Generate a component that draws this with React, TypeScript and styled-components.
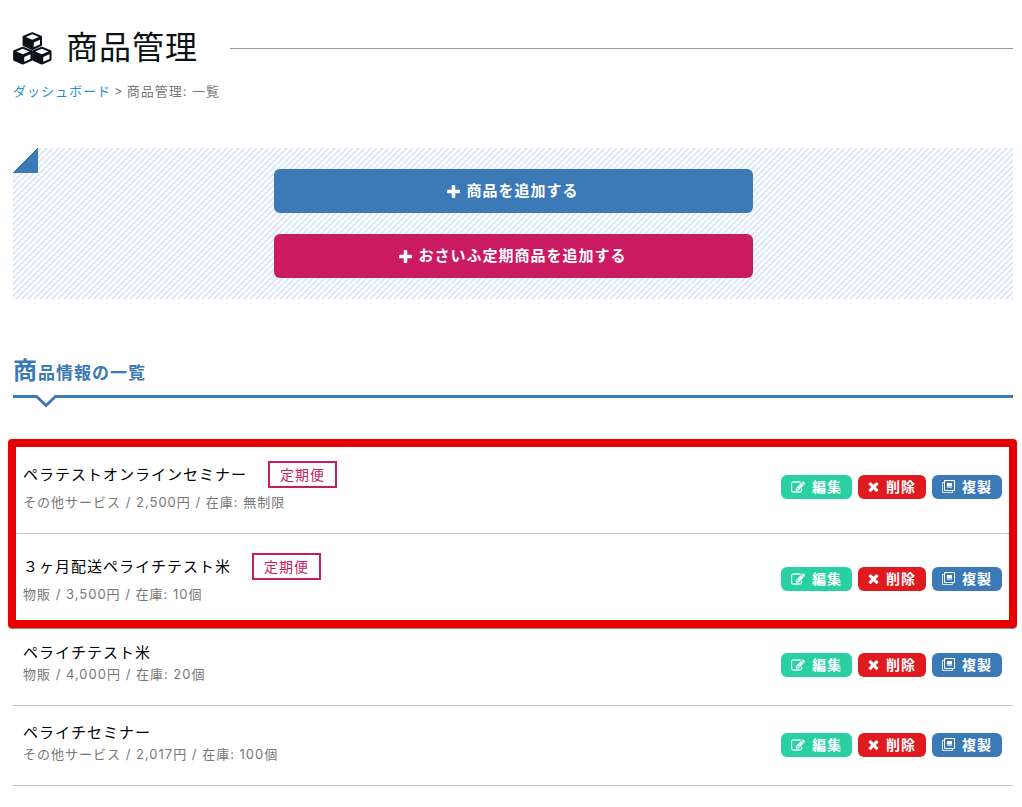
import React from 'react';
import styled, { createGlobalStyle } from 'styled-components';

const color = {
  blue: '#3b79b7',
  pink: '#ca1a61',
  green: '#28d0a3',
  red: '#df1b20',
  link: '#1c8fdc',
  ink: '#0a1418',
  muted: '#777',
  stripe: '#dde9f6',
};

const GlobalStyle = createGlobalStyle`
  *, *::before, *::after { box-sizing: border-box; }
  body {
    margin: 0;
    background: #fff;
    color: #000;
    font-family: Inter, 'Noto Sans CJK JP', sans-serif;
    font-size: 13px;
    line-height: 20px;
    letter-spacing: 1px;
  }
  button { font: inherit; letter-spacing: inherit; cursor: pointer; }
`;

const Page = styled.main`
  padding: 24px 9px 21px 13px;
`;

const PageHeader = styled.header`
  display: flex;
  align-items: center;
  &::after {
    content: '';
    flex: 1;
    height: 1px;
    margin-left: 32px;
    background: #999;
  }
`;

const PageTitle = styled.h1`
  margin: 0 0 0 14px;
  font-size: 32px;
  line-height: 48px;
  font-weight: 400;
  color: ${color.ink};
`;

const Breadcrumb = styled.nav`
  display: flex;
  gap: 3px;
  margin-top: 9px;
  color: ${color.muted};
  a { color: ${color.link}; text-decoration: none; }
`;

const AddPanel = styled.section`
  position: relative;
  display: flex;
  flex-direction: column;
  align-items: center;
  gap: 21px;
  margin-top: 47px;
  padding: 21px 0;
  background: linear-gradient(135deg, #fff 25%, ${color.stripe} 25%, ${color.stripe} 50%, #fff 50%, #fff 75%, ${color.stripe} 75%) 0 0 / 6px 6px;
  &::before {
    content: '';
    position: absolute;
    top: 0;
    left: 0;
    width: 25px;
    height: 25px;
    background: linear-gradient(135deg, #fff 50%, ${color.blue} 50%);
  }
`;

const AddButton = styled.button<{ $bg: string }>`
  display: flex;
  align-items: center;
  justify-content: center;
  gap: 6px;
  width: calc(50% - 21px);
  height: 44px;
  border: 0;
  border-radius: 6px;
  background: ${(p) => p.$bg};
  color: #fff;
  font-size: 15px;
  font-weight: 700;
`;

const SectionTitle = styled.h2`
  position: relative;
  margin: 56px 0 44px;
  padding-bottom: 6px;
  border-bottom: 3px solid ${color.blue};
  color: ${color.blue};
  font-size: 17px;
  line-height: 32px;
  font-weight: 700;
  &::first-letter { font-size: 24px; }
`;

const Notch = styled.svg`
  position: absolute;
  left: 22px;
  bottom: -13px;
`;

const List = styled.ul`
  margin: 0;
  padding: 0;
  list-style: none;
`;

const Highlight = styled.div`
  position: relative;
  &::after {
    content: '';
    position: absolute;
    top: -3px;
    right: -4px;
    bottom: -2px;
    left: -5px;
    border: 8px solid #e60000;
    border-radius: 4px;
    box-shadow: 0 1px 1px rgba(0, 0, 0, 0.5);
    pointer-events: none;
  }
`;

const Row = styled.li`
  display: flex;
  align-items: center;
  justify-content: space-between;
  padding: 0 11px 0 10px;
  border-bottom: 1px solid #c4c4c4;
`;

const Info = styled.div`
  padding: 15px 0 21px;
`;

const NameLine = styled.div`
  display: flex;
  align-items: baseline;
  gap: 21px;
`;

const Name = styled.h3`
  margin: 0;
  font-size: 15px;
  line-height: 23px;
  font-weight: 400;
`;

const Badge = styled.span`
  margin: 4px 0;
  padding: 0 10px;
  border: 2px solid ${color.pink};
  color: ${color.pink};
  font-size: 14px;
  line-height: 23px;
`;

const Detail = styled.p`
  margin: 0;
  color: ${color.muted};
`;

const Actions = styled.div`
  display: flex;
  gap: 6px;
  padding-bottom: 2px;
`;

const ActionButton = styled.button<{ $bg: string }>`
  display: flex;
  align-items: center;
  gap: 7px;
  height: 24px;
  padding: 0 10px;
  border: 0;
  border-radius: 6px;
  background: ${(p) => p.$bg};
  color: #fff;
  font-size: 14px;
  line-height: 24px;
  font-weight: 700;
`;

const CubesIcon = () => (
  <svg width="39" height="33" viewBox="0 0 40 34" aria-hidden="true">
    {[[10, 0.2], [0.2, 15.2], [19.8, 15.2]].map(([x, y]) => (
      <g key={`${x}-${y}`} transform={`translate(${x} ${y})`}>
        <path
          d="M9.8 1.2 18.6 4.8V13.2L9.8 17.2 1 13.2V4.8Z"
          fill={color.ink}
          stroke={color.ink}
          strokeWidth="2.4"
          strokeLinejoin="round"
        />
        <path d="M9.8 2.1 16.6 4.9 9.8 7.8 3 4.9Z" fill="#fff" />
        <path d="M11.3 10.5 17.7 7.7V12.5L11.3 15.5Z" fill="#fff" />
      </g>
    ))}
  </svg>
);

const PlusIcon = () => (
  <svg width="13" height="13" viewBox="192 128 1408 1408" fill="currentColor" aria-hidden="true">
    <path d="M1600 736v192q0 40-28 68t-68 28h-416v416q0 40-28 68t-68 28h-192q-40 0-68-28t-28-68v-416h-416q-40 0-68-28t-28-68v-192q0-40 28-68t68-28h416v-416q0-40 28-68t68-28h192q40 0 68 28t28 68v416h416q40 0 68 28t28 68z" />
  </svg>
);

const EditIcon = () => (
  <svg width="14" height="12" viewBox="0 128 1792 1408" fill="currentColor" stroke="currentColor" strokeWidth="40" aria-hidden="true">
    <path d="M888 1184l116-116-152-152-116 116v56h96v96h56zm440-720q-16-16-33 1l-350 350q-17 17-1 33t33-1l350-350q17-17 1-33zm80 594v190q0 119-84.5 203.5t-203.5 84.5h-832q-119 0-203.5-84.5t-84.5-203.5v-832q0-119 84.5-203.5t203.5-84.5h832q63 0 117 25 15 7 18 23 3 17-9 29l-49 49q-14 14-32 8-23-6-45-6h-832q-66 0-113 47t-47 113v832q0 66 47 113t113 47h832q66 0 113-47t47-113v-126q0-13 9-22l64-64q15-15 35-7t20 29zm-96-738l288 288-672 672h-288v-288zm444 132l-92 92-288-288 92-92q28-28 68-28t68 28l152 152q28 28 28 68t-28 68z" />
  </svg>
);

const CrossIcon = () => (
  <svg width="11" height="10" viewBox="302 340 1188 1214" fill="currentColor" aria-hidden="true">
    <path d="M1490 1322q0 40-28 68l-136 136q-28 28-68 28t-68-28l-294-294-294 294q-28 28-68 28t-68-28l-136-136q-28-28-28-68t28-68l294-294-294-294q-28-28-28-68t28-68l136-136q28-28 68-28t68 28l294 294 294-294q28-28 68-28t68 28l136 136q28 28 28 68t-28 68l-294 294 294 294q28 28 28 68z" />
  </svg>
);

const CopyIcon = () => (
  <svg width="13" height="13" viewBox="0 0 13 13" fill="none" stroke="currentColor" aria-hidden="true">
    <path d="M2.5.5H12.5V10.5H2.5Z" />
    <path d="M2.5 2.5H.5V12.5H10.5V11" opacity="0.8" />
    <path d="M5 3h5v3H5z" fill="currentColor" stroke="none" />
    <path d="M5 6h5v2H5z" fill="currentColor" stroke="none" opacity="0.6" />
  </svg>
);

type Product = { name: string; detail: string; subscription?: boolean };

const subscriptions: Product[] = [
  { name: 'ペラテストオンラインセミナー', detail: 'その他サービス / 2,500円 / 在庫: 無制限', subscription: true },
  { name: '３ヶ月配送ペライチテスト米', detail: '物販 / 3,500円 / 在庫: 10個', subscription: true },
];

const products: Product[] = [
  { name: 'ペライチテスト米', detail: '物販 / 4,000円 / 在庫: 20個' },
  { name: 'ペライチセミナー', detail: 'その他サービス / 2,017円 / 在庫: 100個' },
];

const ProductRow = ({ name, detail, subscription }: Product) => (
  <Row>
    <Info>
      <NameLine>
        <Name>{name}</Name>
        {subscription && <Badge>定期便</Badge>}
      </NameLine>
      <Detail>{detail}</Detail>
    </Info>
    <Actions>
      <ActionButton type="button" $bg={color.green}><EditIcon />編集</ActionButton>
      <ActionButton type="button" $bg={color.red}><CrossIcon />削除</ActionButton>
      <ActionButton type="button" $bg={color.blue}><CopyIcon />複製</ActionButton>
    </Actions>
  </Row>
);

export default function App() {
  return (
    <>
      <GlobalStyle />
      <Page>
        <PageHeader>
          <CubesIcon />
          <PageTitle>商品管理</PageTitle>
        </PageHeader>
        <Breadcrumb aria-label="パンくず">
          <a href="#dashboard">ダッシュボード</a>
          <span>&gt;</span>
          <span>商品管理: 一覧</span>
        </Breadcrumb>
        <AddPanel>
          <AddButton type="button" $bg={color.blue}><PlusIcon />商品を追加する</AddButton>
          <AddButton type="button" $bg={color.pink}><PlusIcon />おさいふ定期商品を追加する</AddButton>
        </AddPanel>
        <SectionTitle>
          商品情報の一覧
          <Notch width="22" height="14" viewBox="0 0 22 14" aria-hidden="true">
            <path d="M1 0H21L11 11Z" fill="#fff" />
            <path d="M1 2 11 11.5 21 2" fill="none" stroke={color.blue} strokeWidth="3" />
          </Notch>
        </SectionTitle>
        <Highlight>
          <List>
            {subscriptions.map((p) => <ProductRow key={p.name} {...p} />)}
          </List>
        </Highlight>
        <List>
          {products.map((p) => <ProductRow key={p.name} {...p} />)}
        </List>
      </Page>
    </>
  );
}
